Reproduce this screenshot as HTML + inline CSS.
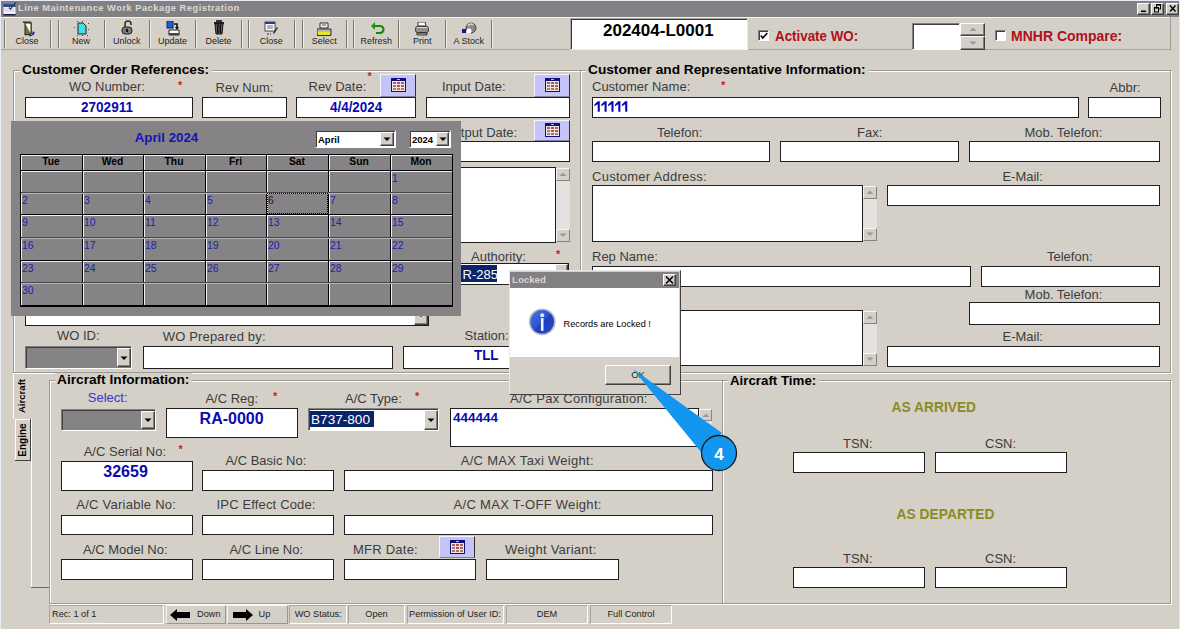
<!DOCTYPE html><html><head><meta charset="utf-8"><style>
html,body{margin:0;padding:0;}
body{width:1180px;height:629px;overflow:hidden;position:relative;background:#d4d0c8;font-family:"Liberation Sans",sans-serif;}
.r{position:absolute;}
.t{position:absolute;white-space:pre;}
</style></head><body>
<div class="r" style="left:0px;top:0px;width:1180px;height:1px;background:#e6ecf8;"></div>
<div class="r" style="left:0px;top:0px;width:1px;height:629px;background:#e8eef8;"></div>
<div class="r" style="left:1px;top:1px;width:1179px;height:16px;background:#838084;"></div>
<svg class="r" style="left:3px;top:1px" width="14" height="15"><rect x="0.5" y="3" width="12" height="3" fill="#2a4a9a"/><rect x="0.5" y="6" width="12" height="7" fill="#f2f0f4"/><path d="M1.5 8h10M1.5 10h10" stroke="#e0c8d8"/><rect x="0.5" y="13" width="12" height="1.5" fill="#101a40"/><path d="M6 6.5l1.5 1.5 5.5-7" stroke="#1a4a4a" stroke-width="1.2" fill="none"/><path d="M11.5 1l1.5-1" stroke="#c08040"/></svg>
<div class="t" style="left:18px;top:4.33px;font-size:9.3px;line-height:9.3px;color:#dcd8d4;font-weight:bold;letter-spacing:0.5px;">Line Maintenance Work Package Registration</div>
<div class="r" style="left:1137px;top:3px;width:13px;height:12px;background:#d4d0c8;box-sizing:border-box;border-top:1px solid #fff;border-left:1px solid #fff;border-right:1px solid #404040;border-bottom:1px solid #404040;box-shadow:inset -1px -1px 0 #808080;"></div>
<div class="r" style="left:1151px;top:3px;width:13px;height:12px;background:#d4d0c8;box-sizing:border-box;border-top:1px solid #fff;border-left:1px solid #fff;border-right:1px solid #404040;border-bottom:1px solid #404040;box-shadow:inset -1px -1px 0 #808080;"></div>
<div class="r" style="left:1166px;top:3px;width:13px;height:12px;background:#d4d0c8;box-sizing:border-box;border-top:1px solid #fff;border-left:1px solid #fff;border-right:1px solid #404040;border-bottom:1px solid #404040;box-shadow:inset -1px -1px 0 #808080;"></div>
<svg class="r" style="left:1137px;top:3px" width="13" height="12"><rect x="4" y="7.5" width="5" height="1.6" fill="#000"/></svg>
<svg class="r" style="left:1151px;top:3px" width="13" height="12"><rect x="5.5" y="1.5" width="4" height="4.5" fill="none" stroke="#000"/><rect x="5" y="1" width="5" height="1.6" fill="#000"/><rect x="3.5" y="4.5" width="4" height="4.5" fill="#d4d0c8" stroke="#000"/><rect x="3" y="4" width="5" height="1.6" fill="#000"/></svg>
<svg class="r" style="left:1166px;top:3px" width="13" height="12"><path d="M4 2.5l5.5 6M9.5 2.5l-5.5 6" stroke="#000" stroke-width="1.5"/></svg>
<div class="r" style="left:1179px;top:0px;width:1px;height:629px;background:#e4eaf4;"></div>
<div class="r" style="left:1px;top:17px;width:1170px;height:1px;background:#f4f2ee;"></div>
<div class="r" style="left:1px;top:49px;width:1170px;height:1px;background:#a8a49e;"></div>
<div class="r" style="left:1170px;top:17px;width:1px;height:33px;background:#9d9a96;"></div>
<div class="r" style="left:4px;top:20px;width:1px;height:28px;background:#7a7672;"></div>
<div class="r" style="left:5px;top:20px;width:1px;height:28px;background:#eeece8;"></div>
<div class="r" style="left:50px;top:20px;width:1px;height:28px;background:#7a7672;"></div>
<div class="r" style="left:51px;top:20px;width:1px;height:28px;background:#eeece8;"></div>
<div class="r" style="left:58px;top:20px;width:1px;height:28px;background:#7a7672;"></div>
<div class="r" style="left:59px;top:20px;width:1px;height:28px;background:#eeece8;"></div>
<div class="r" style="left:104px;top:20px;width:1px;height:28px;background:#7a7672;"></div>
<div class="r" style="left:105px;top:20px;width:1px;height:28px;background:#eeece8;"></div>
<div class="r" style="left:149px;top:20px;width:1px;height:28px;background:#7a7672;"></div>
<div class="r" style="left:150px;top:20px;width:1px;height:28px;background:#eeece8;"></div>
<div class="r" style="left:195px;top:20px;width:1px;height:28px;background:#7a7672;"></div>
<div class="r" style="left:196px;top:20px;width:1px;height:28px;background:#eeece8;"></div>
<div class="r" style="left:241px;top:20px;width:1px;height:28px;background:#7a7672;"></div>
<div class="r" style="left:242px;top:20px;width:1px;height:28px;background:#eeece8;"></div>
<div class="r" style="left:248px;top:20px;width:1px;height:28px;background:#7a7672;"></div>
<div class="r" style="left:249px;top:20px;width:1px;height:28px;background:#eeece8;"></div>
<div class="r" style="left:294px;top:20px;width:1px;height:28px;background:#7a7672;"></div>
<div class="r" style="left:295px;top:20px;width:1px;height:28px;background:#eeece8;"></div>
<div class="r" style="left:302px;top:20px;width:1px;height:28px;background:#7a7672;"></div>
<div class="r" style="left:303px;top:20px;width:1px;height:28px;background:#eeece8;"></div>
<div class="r" style="left:346px;top:20px;width:1px;height:28px;background:#7a7672;"></div>
<div class="r" style="left:347px;top:20px;width:1px;height:28px;background:#eeece8;"></div>
<div class="r" style="left:353px;top:20px;width:1px;height:28px;background:#7a7672;"></div>
<div class="r" style="left:354px;top:20px;width:1px;height:28px;background:#eeece8;"></div>
<div class="r" style="left:398px;top:20px;width:1px;height:28px;background:#7a7672;"></div>
<div class="r" style="left:399px;top:20px;width:1px;height:28px;background:#eeece8;"></div>
<div class="r" style="left:445px;top:20px;width:1px;height:28px;background:#7a7672;"></div>
<div class="r" style="left:446px;top:20px;width:1px;height:28px;background:#eeece8;"></div>
<div class="r" style="left:491px;top:20px;width:1px;height:28px;background:#7a7672;"></div>
<div class="r" style="left:492px;top:20px;width:1px;height:28px;background:#eeece8;"></div>
<div class="t" style="left:-173px;width:400px;text-align:center;top:37.08px;font-size:9px;line-height:9px;color:#222;font-weight:normal;">Close</div>
<div class="t" style="left:-119px;width:400px;text-align:center;top:37.08px;font-size:9px;line-height:9px;color:#222;font-weight:normal;">New</div>
<div class="t" style="left:-73.2px;width:400px;text-align:center;top:37.08px;font-size:9px;line-height:9px;color:#222;font-weight:normal;">Unlock</div>
<div class="t" style="left:-27.599999999999994px;width:400px;text-align:center;top:37.08px;font-size:9px;line-height:9px;color:#222;font-weight:normal;">Update</div>
<div class="t" style="left:18.5px;width:400px;text-align:center;top:37.08px;font-size:9px;line-height:9px;color:#222;font-weight:normal;">Delete</div>
<div class="t" style="left:71.19999999999999px;width:400px;text-align:center;top:37.08px;font-size:9px;line-height:9px;color:#222;font-weight:normal;">Close</div>
<div class="t" style="left:124.30000000000001px;width:400px;text-align:center;top:37.08px;font-size:9px;line-height:9px;color:#222;font-weight:normal;">Select</div>
<div class="t" style="left:176.2px;width:400px;text-align:center;top:37.08px;font-size:9px;line-height:9px;color:#222;font-weight:normal;">Refresh</div>
<div class="t" style="left:222.3px;width:400px;text-align:center;top:37.08px;font-size:9px;line-height:9px;color:#222;font-weight:normal;">Print</div>
<div class="t" style="left:268.7px;width:400px;text-align:center;top:37.08px;font-size:9px;line-height:9px;color:#222;font-weight:normal;">A Stock</div>
<svg class="r" style="left:22px;top:21px" width="16" height="16"><path d="M1 1h8v12l-6 1v-12z" fill="#6a7a20" stroke="#222" stroke-width="1"/><path d="M3 2h6v11" fill="#fff" stroke="#222"/><path d="M7 14c2 1 4 0 5-2" stroke="#2020a0" stroke-width="1.5" fill="none"/><path d="M11 10l2 2-3 1z" fill="#2020a0"/></svg>
<svg class="r" style="left:74px;top:21px" width="16" height="16"><path d="M4 2h5l3 3v8h-8z" fill="#40e0e8" stroke="#222"/><rect x="0" y="6" width="1" height="1" fill="#444"/><rect x="14" y="2" width="1" height="1" fill="#444"/><rect x="14" y="8" width="1" height="1" fill="#444"/><rect x="3" y="14" width="1" height="1" fill="#444"/><rect x="8" y="14" width="1" height="1" fill="#444"/><rect x="13" y="14" width="1" height="1" fill="#444"/><rect x="3" y="0" width="1" height="1" fill="#444"/><rect x="8" y="0" width="1" height="1" fill="#444"/></svg>
<svg class="r" style="left:120px;top:20px" width="16" height="16"><path d="M5 7v-3a3 3 0 0 1 6 0v1" stroke="#333" stroke-width="1.6" fill="none"/><rect x="2" y="7" width="10" height="7" rx="3" fill="#7a7a7a" stroke="#222"/><rect x="6" y="9" width="2" height="3" fill="#111"/><path d="M0 4l3 1-2 1z" fill="#e8e820"/></svg>
<svg class="r" style="left:166px;top:21px" width="16" height="16"><rect x="1" y="0" width="6" height="7" fill="#1a60d8" stroke="#102060"/><path d="M8 3h3v4" stroke="#111" stroke-width="1.6" fill="none"/><path d="M9 6h4l-2 3z" fill="#111"/><path d="M3 9h10v5h-10z" fill="#fff" stroke="#222"/><rect x="3" y="12" width="10" height="2" fill="#444"/></svg>
<svg class="r" style="left:213px;top:20px" width="16" height="16"><rect x="3" y="0" width="6" height="2" fill="#333"/><rect x="1" y="2" width="10" height="2" fill="#222"/><path d="M2 4h8l-1 10h-6z" fill="#606060" stroke="#111"/><path d="M4.5 5v8M6 5v8M7.5 5v8" stroke="#111"/></svg>
<svg class="r" style="left:264px;top:21px" width="16" height="16"><rect x="1" y="1" width="10" height="9" fill="#fff" stroke="#444"/><rect x="1" y="1" width="10" height="2" fill="#2a3a90"/><path d="M3 5h6M3 7h6" stroke="#666"/><path d="M9 12l4-6 1 1-4 6z" fill="#333"/><path d="M3 13h2M6 13h1" stroke="#333"/></svg>
<svg class="r" style="left:317px;top:22px" width="16" height="16"><path d="M3 1h8v5h-8z" fill="#f0f0f0" stroke="#333"/><path d="M5 3h4" stroke="#555"/><path d="M0 7h14v6h-14z" fill="#b8b8b8" stroke="#333"/><rect x="1" y="10" width="12" height="3" fill="#e8e820"/><rect x="0" y="13" width="14" height="1" fill="#333"/></svg>
<svg class="r" style="left:371px;top:22px" width="16" height="16"><path d="M3 4h6a3 3 0 0 1 0 7h-4" stroke="#118811" stroke-width="2.2" fill="none"/><path d="M0 4l4-4v8z" fill="#119911"/></svg>
<svg class="r" style="left:415px;top:22px" width="16" height="16"><path d="M3 0h7l1 4h-8z" fill="#fff" stroke="#333"/><rect x="0.5" y="4.5" width="13" height="6" rx="2" fill="#ddd" stroke="#333"/><path d="M1 7h12M1 9h12" stroke="#444"/><path d="M2 11h10v2h-10z" fill="#bbb" stroke="#333"/></svg>
<svg class="r" style="left:462px;top:22px" width="16" height="16"><circle cx="9" cy="6" r="5" fill="#888" stroke="#444"/><path d="M6 4a3 3 0 0 1 5-1" stroke="#ddd" stroke-width="1.5" fill="none"/><circle cx="7" cy="9" r="2.5" fill="#fff"/><rect x="0" y="7" width="4" height="4" fill="#1a1a90"/></svg>
<div class="r" style="left:570px;top:18px;width:178px;height:32px;background:#fff;box-sizing:border-box;border-top:1px solid #a8a49e;border-left:1px solid #a8a49e;border-right:1px solid #e8e6e2;border-bottom:1px solid #f0f0f0;box-shadow:inset 1px 1px 0 #383838;"></div>
<div class="t" style="left:603px;top:21.81px;font-size:17px;line-height:17px;color:#000;font-weight:bold;">202404-L0001</div>
<div class="r" style="left:758px;top:30px;width:11px;height:11px;background:#fff;box-sizing:border-box;border-top:1px solid #808080;border-left:1px solid #808080;border-right:1px solid #fff;border-bottom:1px solid #fff;box-shadow:inset 1px 1px 0 #404040;"></div>
<svg class="r" style="left:759.5px;top:31.5px" width="8" height="8"><path d="M0.8 3.5l2 2.5 4.5-5" stroke="#000" stroke-width="1.6" fill="none"/></svg>
<div class="t" style="left:775px;top:28.70px;font-size:14.3px;line-height:14.3px;color:#b0101a;font-weight:bold;transform:scaleX(0.935);transform-origin:0 0;">Activate WO:</div>
<div class="r" style="left:912px;top:23px;width:48px;height:27px;background:#fff;box-sizing:border-box;border-top:1px solid #808080;border-left:1px solid #808080;border-right:1px solid #fff;border-bottom:1px solid #fff;box-shadow:inset 1px 1px 0 #404040;"></div>
<div class="r" style="left:960px;top:23px;width:25px;height:13px;background:#d4d0c8;box-sizing:border-box;border-top:1px solid #fff;border-left:1px solid #fff;border-right:1px solid #404040;border-bottom:1px solid #404040;box-shadow:inset -1px -1px 0 #808080;"></div>
<div class="r" style="left:960px;top:36px;width:25px;height:14px;background:#d4d0c8;box-sizing:border-box;border-top:1px solid #fff;border-left:1px solid #fff;border-right:1px solid #404040;border-bottom:1px solid #404040;box-shadow:inset -1px -1px 0 #808080;"></div>
<svg class="r" style="left:969px;top:27px" width="8" height="5"><path d="M0.5 4h7l-3.5-3.5z" fill="#999"/></svg>
<svg class="r" style="left:969px;top:41px" width="8" height="5"><path d="M0.5 0.5h7l-3.5 3.5z" fill="#999"/></svg>
<div class="r" style="left:995px;top:30px;width:11px;height:11px;background:#fff;box-sizing:border-box;border-top:1px solid #808080;border-left:1px solid #808080;border-right:1px solid #fff;border-bottom:1px solid #fff;box-shadow:inset 1px 1px 0 #404040;"></div>
<div class="t" style="left:1011px;top:29.15px;font-size:14px;line-height:14px;color:#b0101a;font-weight:bold;">MNHR Compare:</div>
<div class="r" style="left:14px;top:71px;width:568px;height:303px;background:transparent;box-sizing:border-box;border:1px solid #fff;"></div>
<div class="r" style="left:13px;top:70px;width:568px;height:303px;background:transparent;box-sizing:border-box;border:1px solid #9d9a96;"></div>
<div class="t" style="left:20px;top:62.80px;font-size:13.7px;line-height:13.7px;color:#000;font-weight:bold;background:#d4d0c8;padding:0 3px 0 2px">Customer Order References:</div>
<div class="t" style="left:69px;top:80.40px;font-size:13px;line-height:13px;color:#3c3c3c;font-weight:normal;">WO Number:</div>
<div class="t" style="left:178px;top:80px;font-size:11px;line-height:11px;color:#d01818;font-weight:bold">*</div>
<div class="t" style="left:215.6px;top:80.90px;font-size:13px;line-height:13px;color:#3c3c3c;font-weight:normal;">Rev Num:</div>
<div class="t" style="left:308.5px;top:80.40px;font-size:13px;line-height:13px;color:#3c3c3c;font-weight:normal;">Rev Date:</div>
<div class="t" style="left:367.5px;top:71px;font-size:11px;line-height:11px;color:#d01818;font-weight:bold">*</div>
<div class="r" style="left:380px;top:74px;width:36px;height:23px;background:#c4c4f8;box-sizing:border-box;border-top:1px solid #f4f4ff;border-left:1px solid #f4f4ff;border-right:1px solid #303030;border-bottom:1px solid #8080a0;"></div>
<svg class="r" style="left:391px;top:78px" width="15" height="14"><rect x="0" y="0" width="15" height="14" fill="#10107a"/><rect x="1" y="3" width="13" height="10" fill="#f0e8e0"/>
<rect x="2" y="4" width="3" height="2" fill="#b06060"/><rect x="6" y="4" width="3" height="2" fill="#c05050"/><rect x="10" y="4" width="3" height="2" fill="#b06060"/>
<rect x="2" y="7" width="3" height="2" fill="#a08070"/><rect x="6" y="7" width="3" height="2" fill="#c05050"/><rect x="10" y="7" width="3" height="2" fill="#b06060"/>
<rect x="2" y="10" width="3" height="2" fill="#a08070"/><rect x="6" y="10" width="3" height="2" fill="#b07070"/><rect x="10" y="10" width="3" height="2" fill="#a08070"/>
<rect x="6" y="1" width="3" height="1" fill="#c0c0ff"/></svg>
<div class="t" style="left:442px;top:80.40px;font-size:13px;line-height:13px;color:#3c3c3c;font-weight:normal;">Input Date:</div>
<div class="r" style="left:534px;top:74px;width:36px;height:23px;background:#c4c4f8;box-sizing:border-box;border-top:1px solid #f4f4ff;border-left:1px solid #f4f4ff;border-right:1px solid #303030;border-bottom:1px solid #8080a0;"></div>
<svg class="r" style="left:545px;top:78px" width="15" height="14"><rect x="0" y="0" width="15" height="14" fill="#10107a"/><rect x="1" y="3" width="13" height="10" fill="#f0e8e0"/>
<rect x="2" y="4" width="3" height="2" fill="#b06060"/><rect x="6" y="4" width="3" height="2" fill="#c05050"/><rect x="10" y="4" width="3" height="2" fill="#b06060"/>
<rect x="2" y="7" width="3" height="2" fill="#a08070"/><rect x="6" y="7" width="3" height="2" fill="#c05050"/><rect x="10" y="7" width="3" height="2" fill="#b06060"/>
<rect x="2" y="10" width="3" height="2" fill="#a08070"/><rect x="6" y="10" width="3" height="2" fill="#b07070"/><rect x="10" y="10" width="3" height="2" fill="#a08070"/>
<rect x="6" y="1" width="3" height="1" fill="#c0c0ff"/></svg>
<div class="r" style="left:25px;top:97px;width:168px;height:21px;background:#fff;box-sizing:border-box;border:1px solid #1e1e1e;"></div>
<div class="t" style="left:81.3px;top:100.03px;font-size:14.5px;line-height:14.5px;color:#0a0ab0;font-weight:bold;transform:scaleX(0.935);transform-origin:0 0;">2702911</div>
<div class="r" style="left:202px;top:97px;width:85px;height:21px;background:#fff;box-sizing:border-box;border:1px solid #1e1e1e;"></div>
<div class="r" style="left:296px;top:97px;width:120px;height:21px;background:#fff;box-sizing:border-box;border:1px solid #1e1e1e;"></div>
<div class="t" style="left:329.5px;top:99.93px;font-size:14.5px;line-height:14.5px;color:#0a0ab0;font-weight:bold;transform:scaleX(0.925);transform-origin:0 0;">4/4/2024</div>
<div class="r" style="left:426px;top:97px;width:144px;height:21px;background:#fff;box-sizing:border-box;border:1px solid #1e1e1e;"></div>
<div class="t" style="left:443.5px;top:125.50px;font-size:13px;line-height:13px;color:#3c3c3c;font-weight:normal;">Output Date:</div>
<div class="r" style="left:534px;top:120px;width:36px;height:21px;background:#c4c4f8;box-sizing:border-box;border-top:1px solid #f4f4ff;border-left:1px solid #f4f4ff;border-right:1px solid #303030;border-bottom:1px solid #8080a0;"></div>
<svg class="r" style="left:545px;top:123px" width="15" height="14"><rect x="0" y="0" width="15" height="14" fill="#10107a"/><rect x="1" y="3" width="13" height="10" fill="#f0e8e0"/>
<rect x="2" y="4" width="3" height="2" fill="#b06060"/><rect x="6" y="4" width="3" height="2" fill="#c05050"/><rect x="10" y="4" width="3" height="2" fill="#b06060"/>
<rect x="2" y="7" width="3" height="2" fill="#a08070"/><rect x="6" y="7" width="3" height="2" fill="#c05050"/><rect x="10" y="7" width="3" height="2" fill="#b06060"/>
<rect x="2" y="10" width="3" height="2" fill="#a08070"/><rect x="6" y="10" width="3" height="2" fill="#b07070"/><rect x="10" y="10" width="3" height="2" fill="#a08070"/>
<rect x="6" y="1" width="3" height="1" fill="#c0c0ff"/></svg>
<div class="r" style="left:426px;top:141px;width:144px;height:21px;background:#fff;box-sizing:border-box;border:1px solid #1e1e1e;"></div>
<div class="r" style="left:25px;top:167px;width:531px;height:76px;background:#fff;box-sizing:border-box;border:1px solid #1e1e1e;"></div>
<div class="r" style="left:556px;top:168px;width:14px;height:74px;background:#e4e2de;"></div>
<div class="r" style="left:556px;top:168px;width:14px;height:13px;background:#d4d0c8;box-sizing:border-box;border-top:1px solid #f6f6f6;border-left:1px solid #f6f6f6;border-right:1px solid #86827e;border-bottom:1px solid #86827e;"></div>
<div class="r" style="left:556px;top:229px;width:14px;height:13px;background:#d4d0c8;box-sizing:border-box;border-top:1px solid #f6f6f6;border-left:1px solid #f6f6f6;border-right:1px solid #86827e;border-bottom:1px solid #86827e;"></div>
<svg class="r" style="left:559.0px;top:172.0px" width="8" height="5"><path d="M0.5 4h7l-3.5-3.5z" fill="#9a9a9a"/></svg>
<svg class="r" style="left:559.0px;top:233.0px" width="8" height="5"><path d="M0.5 0.5h7l-3.5 3.5z" fill="#9a9a9a"/></svg>
<div class="t" style="left:471px;top:250.00px;font-size:13px;line-height:13px;color:#3c3c3c;font-weight:normal;">Authority:</div>
<div class="t" style="left:556px;top:249px;font-size:11px;line-height:11px;color:#d01818;font-weight:bold">*</div>
<div class="r" style="left:403px;top:263px;width:166px;height:22px;background:#fff;box-sizing:border-box;border:1px solid #1e1e1e;"></div>
<div class="r" style="left:404px;top:265px;width:93px;height:17px;background:#0a246a;"></div>
<div class="t" style="left:462.5px;top:268.00px;font-size:13px;line-height:13px;color:#fff;font-weight:normal;">R-285</div>
<div class="r" style="left:555px;top:264px;width:13px;height:20px;background:#d4d0c8;box-sizing:border-box;border-top:1px solid #fff;border-left:1px solid #fff;border-right:1px solid #404040;border-bottom:1px solid #404040;box-shadow:inset -1px -1px 0 #808080;"></div>
<svg class="r" style="left:557.5px;top:272.0px" width="8" height="5"><path d="M0.5 0.5h7l-3.5 3.5z" fill="#000"/></svg>
<div class="r" style="left:25px;top:304px;width:404px;height:22px;background:#fff;box-sizing:border-box;border:1px solid #1e1e1e;"></div>
<div class="r" style="left:414px;top:305px;width:14px;height:20px;background:#d4d0c8;box-sizing:border-box;border-top:1px solid #fff;border-left:1px solid #fff;border-right:1px solid #404040;border-bottom:1px solid #404040;box-shadow:inset -1px -1px 0 #808080;"></div>
<svg class="r" style="left:417.0px;top:313.0px" width="8" height="5"><path d="M0.5 0.5h7l-3.5 3.5z" fill="#000"/></svg>
<div class="t" style="left:57px;top:329.00px;font-size:13px;line-height:13px;color:#3c3c3c;font-weight:normal;">WO ID:</div>
<div class="t" style="left:162.7px;top:329.70px;font-size:13px;line-height:13px;color:#3c3c3c;font-weight:normal;letter-spacing:0.17px;">WO Prepared by:</div>
<div class="t" style="left:464.6px;top:329.00px;font-size:13px;line-height:13px;color:#3c3c3c;font-weight:normal;">Station:</div>
<div class="r" style="left:25px;top:346px;width:107px;height:23px;background:#858385;box-sizing:border-box;border-top:1px solid #808080;border-left:1px solid #808080;border-right:1px solid #fff;border-bottom:1px solid #fff;box-shadow:inset 1px 1px 0 #404040;"></div>
<div class="r" style="left:117px;top:348px;width:14px;height:19px;background:#d4d0c8;box-sizing:border-box;border-top:1px solid #fff;border-left:1px solid #fff;border-right:1px solid #404040;border-bottom:1px solid #404040;box-shadow:inset -1px -1px 0 #808080;"></div>
<svg class="r" style="left:120.0px;top:355.5px" width="8" height="5"><path d="M0.5 0.5h7l-3.5 3.5z" fill="#000"/></svg>
<div class="r" style="left:143px;top:346px;width:250px;height:23px;background:#fff;box-sizing:border-box;border:1px solid #1e1e1e;"></div>
<div class="r" style="left:403px;top:346px;width:157px;height:23px;background:#fff;box-sizing:border-box;border:1px solid #1e1e1e;"></div>
<div class="t" style="left:473.5px;top:348.03px;font-size:14.5px;line-height:14.5px;color:#0a0ab0;font-weight:bold;transform:scaleX(0.92);transform-origin:0 0;">TLL</div>
<div class="r" style="left:581px;top:71px;width:591px;height:303px;background:transparent;box-sizing:border-box;border:1px solid #fff;"></div>
<div class="r" style="left:580px;top:70px;width:591px;height:303px;background:transparent;box-sizing:border-box;border:1px solid #9d9a96;"></div>
<div class="t" style="left:586px;top:62.80px;font-size:13.7px;line-height:13.7px;color:#000;font-weight:bold;background:#d4d0c8;padding:0 3px 0 2px">Customer and Representative Information:</div>
<div class="t" style="left:592px;top:80.40px;font-size:13px;line-height:13px;color:#3c3c3c;font-weight:normal;">Customer Name:</div>
<div class="t" style="left:721px;top:80px;font-size:11px;line-height:11px;color:#d01818;font-weight:bold">*</div>
<div class="t" style="left:1109.5px;top:81.20px;font-size:13px;line-height:13px;color:#3c3c3c;font-weight:normal;">Abbr:</div>
<div class="r" style="left:592px;top:97px;width:487px;height:21px;background:#fff;box-sizing:border-box;border:1px solid #1e1e1e;"></div>
<svg class="r" style="left:590.6px;top:100px" width="45" height="13"><path d="M6.70 1.2H8.80V11.8H6.70V4.2L3.40 6.3V4.4L6.70 1.2Z M13.57 1.2H15.67V11.8H13.57V4.2L10.27 6.3V4.4L13.57 1.2Z M20.44 1.2H22.54V11.8H20.44V4.2L17.14 6.3V4.4L20.44 1.2Z M27.31 1.2H29.41V11.8H27.31V4.2L24.01 6.3V4.4L27.31 1.2Z M34.18 1.2H36.28V11.8H34.18V4.2L30.88 6.3V4.4L34.18 1.2Z" fill="#0a0ab0"/></svg>
<div class="r" style="left:1088px;top:97px;width:73px;height:21px;background:#fff;box-sizing:border-box;border:1px solid #1e1e1e;"></div>
<div class="t" style="left:656.9px;top:126.00px;font-size:13px;line-height:13px;color:#3c3c3c;font-weight:normal;">Telefon:</div>
<div class="t" style="left:857px;top:126.00px;font-size:13px;line-height:13px;color:#3c3c3c;font-weight:normal;">Fax:</div>
<div class="t" style="left:1024.5px;top:126.00px;font-size:13px;line-height:13px;color:#3c3c3c;font-weight:normal;">Mob. Telefon:</div>
<div class="r" style="left:592px;top:141px;width:178px;height:21px;background:#fff;box-sizing:border-box;border:1px solid #1e1e1e;"></div>
<div class="r" style="left:780px;top:141px;width:179px;height:21px;background:#fff;box-sizing:border-box;border:1px solid #1e1e1e;"></div>
<div class="r" style="left:969px;top:141px;width:191px;height:21px;background:#fff;box-sizing:border-box;border:1px solid #1e1e1e;"></div>
<div class="t" style="left:592px;top:170.00px;font-size:13px;line-height:13px;color:#3c3c3c;font-weight:normal;letter-spacing:0.26px;">Customer Address:</div>
<div class="t" style="left:1002.4px;top:170.00px;font-size:13px;line-height:13px;color:#3c3c3c;font-weight:normal;">E-Mail:</div>
<div class="r" style="left:592px;top:185px;width:271px;height:57px;background:#fff;box-sizing:border-box;border:1px solid #1e1e1e;"></div>
<div class="r" style="left:863px;top:186px;width:14px;height:55px;background:#e4e2de;"></div>
<div class="r" style="left:863px;top:186px;width:14px;height:13px;background:#d4d0c8;box-sizing:border-box;border-top:1px solid #f6f6f6;border-left:1px solid #f6f6f6;border-right:1px solid #86827e;border-bottom:1px solid #86827e;"></div>
<div class="r" style="left:863px;top:228px;width:14px;height:13px;background:#d4d0c8;box-sizing:border-box;border-top:1px solid #f6f6f6;border-left:1px solid #f6f6f6;border-right:1px solid #86827e;border-bottom:1px solid #86827e;"></div>
<svg class="r" style="left:866.0px;top:190.0px" width="8" height="5"><path d="M0.5 4h7l-3.5-3.5z" fill="#9a9a9a"/></svg>
<svg class="r" style="left:866.0px;top:232.0px" width="8" height="5"><path d="M0.5 0.5h7l-3.5 3.5z" fill="#9a9a9a"/></svg>
<div class="r" style="left:887px;top:185px;width:273px;height:21px;background:#fff;box-sizing:border-box;border:1px solid #1e1e1e;"></div>
<div class="t" style="left:592px;top:250.00px;font-size:13px;line-height:13px;color:#3c3c3c;font-weight:normal;">Rep Name:</div>
<div class="t" style="left:1047px;top:250.00px;font-size:13px;line-height:13px;color:#3c3c3c;font-weight:normal;">Telefon:</div>
<div class="r" style="left:592px;top:266px;width:379px;height:21px;background:#fff;box-sizing:border-box;border:1px solid #1e1e1e;"></div>
<div class="r" style="left:981px;top:266px;width:179px;height:21px;background:#fff;box-sizing:border-box;border:1px solid #1e1e1e;"></div>
<div class="t" style="left:592px;top:288.30px;font-size:13px;line-height:13px;color:#3c3c3c;font-weight:normal;">Address:</div>
<div class="t" style="left:1024.6px;top:288.30px;font-size:13px;line-height:13px;color:#3c3c3c;font-weight:normal;">Mob. Telefon:</div>
<div class="r" style="left:969px;top:302px;width:191px;height:23px;background:#fff;box-sizing:border-box;border:1px solid #1e1e1e;"></div>
<div class="r" style="left:592px;top:310px;width:271px;height:56px;background:#fff;box-sizing:border-box;border:1px solid #1e1e1e;"></div>
<div class="r" style="left:863px;top:311px;width:14px;height:55px;background:#e4e2de;"></div>
<div class="r" style="left:863px;top:311px;width:14px;height:13px;background:#d4d0c8;box-sizing:border-box;border-top:1px solid #f6f6f6;border-left:1px solid #f6f6f6;border-right:1px solid #86827e;border-bottom:1px solid #86827e;"></div>
<div class="r" style="left:863px;top:353px;width:14px;height:13px;background:#d4d0c8;box-sizing:border-box;border-top:1px solid #f6f6f6;border-left:1px solid #f6f6f6;border-right:1px solid #86827e;border-bottom:1px solid #86827e;"></div>
<svg class="r" style="left:866.0px;top:315.0px" width="8" height="5"><path d="M0.5 4h7l-3.5-3.5z" fill="#9a9a9a"/></svg>
<svg class="r" style="left:866.0px;top:357.0px" width="8" height="5"><path d="M0.5 0.5h7l-3.5 3.5z" fill="#9a9a9a"/></svg>
<div class="t" style="left:1002.5px;top:330.00px;font-size:13px;line-height:13px;color:#3c3c3c;font-weight:normal;">E-Mail:</div>
<div class="r" style="left:887px;top:346px;width:273px;height:21px;background:#fff;box-sizing:border-box;border:1px solid #1e1e1e;"></div>
<div class="r" style="left:13px;top:373px;width:1px;height:46px;background:#fff;"></div>
<div class="r" style="left:13px;top:373px;width:18px;height:1px;background:#fff;"></div>
<div class="r" style="left:31px;top:419px;width:1px;height:169px;background:#fff;"></div>
<div class="r" style="left:31px;top:587px;width:18px;height:1px;background:#6a6a6a;"></div>
<div class="r" style="left:15px;top:419px;width:1px;height:42px;background:#fff;"></div>
<div class="r" style="left:15px;top:419px;width:16px;height:1px;background:#fff;"></div>
<div class="r" style="left:15px;top:460px;width:16px;height:1px;background:#404040;"></div>
<div class="r" style="left:30px;top:419px;width:1px;height:42px;background:#404040;"></div>
<div class="t" style="left:22px;top:396px;transform:translate(-50%,-50%) rotate(-90deg);font-size:9.6px;line-height:10px;font-weight:bold;color:#000">Aircraft</div>
<div class="t" style="left:23px;top:439.5px;transform:translate(-50%,-50%) rotate(-90deg);font-size:10px;line-height:10px;font-weight:bold;color:#000">Engine</div>
<div class="r" style="left:50px;top:381px;width:674px;height:224px;background:transparent;box-sizing:border-box;border:1px solid #fff;"></div>
<div class="r" style="left:49px;top:380px;width:674px;height:224px;background:transparent;box-sizing:border-box;border:1px solid #9d9a96;"></div>
<div class="t" style="left:55px;top:373.40px;font-size:13.7px;line-height:13.7px;color:#000;font-weight:bold;background:#d4d0c8;padding:0 3px 0 2px">Aircraft Information:</div>
<div class="t" style="left:87.8px;top:391.00px;font-size:13px;line-height:13px;color:#3838c0;font-weight:normal;">Select:</div>
<div class="r" style="left:61px;top:409px;width:95px;height:22px;background:#858385;box-sizing:border-box;border-top:1px solid #808080;border-left:1px solid #808080;border-right:1px solid #fff;border-bottom:1px solid #fff;box-shadow:inset 1px 1px 0 #404040;"></div>
<div class="r" style="left:141px;top:411px;width:14px;height:18px;background:#d4d0c8;box-sizing:border-box;border-top:1px solid #fff;border-left:1px solid #fff;border-right:1px solid #404040;border-bottom:1px solid #404040;box-shadow:inset -1px -1px 0 #808080;"></div>
<svg class="r" style="left:144.0px;top:418.0px" width="8" height="5"><path d="M0.5 0.5h7l-3.5 3.5z" fill="#000"/></svg>
<div class="t" style="left:205.4px;top:392.00px;font-size:13px;line-height:13px;color:#3c3c3c;font-weight:normal;">A/C Reg:</div>
<div class="t" style="left:273px;top:391px;font-size:11px;line-height:11px;color:#d01818;font-weight:bold">*</div>
<div class="r" style="left:166px;top:408px;width:132px;height:30px;background:#fff;box-sizing:border-box;border:1px solid #1e1e1e;"></div>
<div class="t" style="left:199.6px;top:411.26px;font-size:16px;line-height:16px;color:#0a0ab0;font-weight:bold;">RA-0000</div>
<div class="t" style="left:345px;top:392.00px;font-size:13px;line-height:13px;color:#3c3c3c;font-weight:normal;">A/C Type:</div>
<div class="t" style="left:415px;top:391px;font-size:11px;line-height:11px;color:#d01818;font-weight:bold">*</div>
<div class="r" style="left:308px;top:408px;width:131px;height:23px;background:#fff;box-sizing:border-box;border-top:1px solid #808080;border-left:1px solid #808080;border-right:1px solid #fff;border-bottom:1px solid #fff;box-shadow:inset 1px 1px 0 #404040;"></div>
<div class="r" style="left:310px;top:411px;width:64px;height:16px;background:#0a246a;"></div>
<div class="t" style="left:311px;top:412.99px;font-size:13.6px;line-height:13.6px;color:#fff;font-weight:normal;">B737-800</div>
<div class="r" style="left:424px;top:410px;width:14px;height:20px;background:#d4d0c8;box-sizing:border-box;border-top:1px solid #fff;border-left:1px solid #fff;border-right:1px solid #404040;border-bottom:1px solid #404040;box-shadow:inset -1px -1px 0 #808080;"></div>
<svg class="r" style="left:427.0px;top:418.0px" width="8" height="5"><path d="M0.5 0.5h7l-3.5 3.5z" fill="#000"/></svg>
<div class="t" style="left:510px;top:392.00px;font-size:13px;line-height:13px;color:#3c3c3c;font-weight:normal;letter-spacing:0.25px;">A/C Pax Configuration:</div>
<div class="r" style="left:450px;top:408px;width:249px;height:39px;background:#fff;box-sizing:border-box;border:1px solid #1e1e1e;"></div>
<div class="t" style="left:453px;top:411.27px;font-size:13.5px;line-height:13.5px;color:#0a0ab0;font-weight:bold;">444444</div>
<div class="r" style="left:699px;top:409px;width:13px;height:38px;background:#e4e2de;"></div>
<div class="r" style="left:699px;top:409px;width:13px;height:12px;background:#d4d0c8;box-sizing:border-box;border-top:1px solid #f6f6f6;border-left:1px solid #f6f6f6;border-right:1px solid #86827e;border-bottom:1px solid #86827e;"></div>
<div class="r" style="left:699px;top:435px;width:13px;height:12px;background:#d4d0c8;box-sizing:border-box;border-top:1px solid #f6f6f6;border-left:1px solid #f6f6f6;border-right:1px solid #86827e;border-bottom:1px solid #86827e;"></div>
<svg class="r" style="left:701.5px;top:412.5px" width="8" height="5"><path d="M0.5 4h7l-3.5-3.5z" fill="#9a9a9a"/></svg>
<svg class="r" style="left:701.5px;top:438.5px" width="8" height="5"><path d="M0.5 0.5h7l-3.5 3.5z" fill="#9a9a9a"/></svg>
<div class="t" style="left:83.7px;top:444.80px;font-size:13px;line-height:13px;color:#3c3c3c;font-weight:normal;">A/C Serial No:</div>
<div class="t" style="left:178.6px;top:444px;font-size:11px;line-height:11px;color:#d01818;font-weight:bold">*</div>
<div class="r" style="left:61px;top:461px;width:132px;height:30px;background:#fff;box-sizing:border-box;border:1px solid #1e1e1e;"></div>
<div class="t" style="left:103.3px;top:463.96px;font-size:16px;line-height:16px;color:#0a0ab0;font-weight:bold;">32659</div>
<div class="t" style="left:225.4px;top:454.00px;font-size:13px;line-height:13px;color:#3c3c3c;font-weight:normal;">A/C Basic No:</div>
<div class="r" style="left:202px;top:470px;width:132px;height:21px;background:#fff;box-sizing:border-box;border:1px solid #1e1e1e;"></div>
<div class="t" style="left:460.7px;top:454.00px;font-size:13px;line-height:13px;color:#3c3c3c;font-weight:normal;letter-spacing:0.29px;">A/C MAX Taxi Weight:</div>
<div class="r" style="left:344px;top:470px;width:369px;height:21px;background:#fff;box-sizing:border-box;border:1px solid #1e1e1e;"></div>
<div class="t" style="left:76.3px;top:498.00px;font-size:13px;line-height:13px;color:#3c3c3c;font-weight:normal;letter-spacing:0.25px;">A/C Variable No:</div>
<div class="t" style="left:216.6px;top:498.00px;font-size:13px;line-height:13px;color:#3c3c3c;font-weight:normal;letter-spacing:0.15px;">IPC Effect Code:</div>
<div class="t" style="left:453.6px;top:497.80px;font-size:13px;line-height:13px;color:#3c3c3c;font-weight:normal;letter-spacing:0.3px;">A/C MAX T-OFF Weight:</div>
<div class="r" style="left:61px;top:515px;width:132px;height:20px;background:#fff;box-sizing:border-box;border:1px solid #1e1e1e;"></div>
<div class="r" style="left:202px;top:515px;width:132px;height:20px;background:#fff;box-sizing:border-box;border:1px solid #1e1e1e;"></div>
<div class="r" style="left:344px;top:515px;width:369px;height:20px;background:#fff;box-sizing:border-box;border:1px solid #1e1e1e;"></div>
<div class="t" style="left:83px;top:543.00px;font-size:13px;line-height:13px;color:#3c3c3c;font-weight:normal;">A/C Model No:</div>
<div class="t" style="left:229.4px;top:543.00px;font-size:13px;line-height:13px;color:#3c3c3c;font-weight:normal;">A/C Line No:</div>
<div class="t" style="left:352.9px;top:542.90px;font-size:13px;line-height:13px;color:#3c3c3c;font-weight:normal;letter-spacing:0.25px;">MFR Date:</div>
<div class="r" style="left:439px;top:536px;width:36px;height:22px;background:#c4c4f8;box-sizing:border-box;border-top:1px solid #f4f4ff;border-left:1px solid #f4f4ff;border-right:1px solid #303030;border-bottom:1px solid #8080a0;"></div>
<svg class="r" style="left:450px;top:540px" width="15" height="14"><rect x="0" y="0" width="15" height="14" fill="#10107a"/><rect x="1" y="3" width="13" height="10" fill="#f0e8e0"/>
<rect x="2" y="4" width="3" height="2" fill="#b06060"/><rect x="6" y="4" width="3" height="2" fill="#c05050"/><rect x="10" y="4" width="3" height="2" fill="#b06060"/>
<rect x="2" y="7" width="3" height="2" fill="#a08070"/><rect x="6" y="7" width="3" height="2" fill="#c05050"/><rect x="10" y="7" width="3" height="2" fill="#b06060"/>
<rect x="2" y="10" width="3" height="2" fill="#a08070"/><rect x="6" y="10" width="3" height="2" fill="#b07070"/><rect x="10" y="10" width="3" height="2" fill="#a08070"/>
<rect x="6" y="1" width="3" height="1" fill="#c0c0ff"/></svg>
<div class="t" style="left:505px;top:542.90px;font-size:13px;line-height:13px;color:#3c3c3c;font-weight:normal;letter-spacing:0.26px;">Weight Variant:</div>
<div class="r" style="left:61px;top:559px;width:132px;height:21px;background:#fff;box-sizing:border-box;border:1px solid #1e1e1e;"></div>
<div class="r" style="left:202px;top:559px;width:132px;height:21px;background:#fff;box-sizing:border-box;border:1px solid #1e1e1e;"></div>
<div class="r" style="left:344px;top:559px;width:132px;height:21px;background:#fff;box-sizing:border-box;border:1px solid #1e1e1e;"></div>
<div class="r" style="left:486px;top:559px;width:133px;height:21px;background:#fff;box-sizing:border-box;border:1px solid #1e1e1e;"></div>
<div class="r" style="left:723px;top:381px;width:449px;height:224px;background:transparent;box-sizing:border-box;border:1px solid #fff;"></div>
<div class="r" style="left:722px;top:380px;width:449px;height:224px;background:transparent;box-sizing:border-box;border:1px solid #9d9a96;"></div>
<div class="t" style="left:728px;top:374.14px;font-size:13.3px;line-height:13.3px;color:#000;font-weight:bold;background:#d4d0c8;padding:0 3px 0 2px">Aircraft Time:</div>
<div class="t" style="left:891.5px;top:400.82px;font-size:13.8px;line-height:13.8px;color:#8c8c1e;font-weight:bold;">AS ARRIVED</div>
<div class="t" style="left:843px;top:436.80px;font-size:13px;line-height:13px;color:#3c3c3c;font-weight:normal;">TSN:</div>
<div class="t" style="left:985px;top:436.80px;font-size:13px;line-height:13px;color:#3c3c3c;font-weight:normal;">CSN:</div>
<div class="r" style="left:793px;top:452px;width:132px;height:21px;background:#fff;box-sizing:border-box;border:1px solid #1e1e1e;"></div>
<div class="r" style="left:935px;top:452px;width:132px;height:21px;background:#fff;box-sizing:border-box;border:1px solid #1e1e1e;"></div>
<div class="t" style="left:896.6px;top:507.62px;font-size:13.8px;line-height:13.8px;color:#8c8c1e;font-weight:bold;">AS DEPARTED</div>
<div class="t" style="left:843px;top:552.00px;font-size:13px;line-height:13px;color:#3c3c3c;font-weight:normal;">TSN:</div>
<div class="t" style="left:985px;top:552.00px;font-size:13px;line-height:13px;color:#3c3c3c;font-weight:normal;">CSN:</div>
<div class="r" style="left:793px;top:567px;width:132px;height:21px;background:#fff;box-sizing:border-box;border:1px solid #1e1e1e;"></div>
<div class="r" style="left:935px;top:567px;width:132px;height:21px;background:#fff;box-sizing:border-box;border:1px solid #1e1e1e;"></div>
<div class="r" style="left:49px;top:605px;width:115px;height:19px;background:#d4d0c8;box-sizing:border-box;border-top:1px solid #a8a49e;border-left:1px solid #a8a49e;border-right:1px solid #fff;border-bottom:1px solid #fff;"></div>
<div class="t" style="left:52px;top:609.81px;font-size:9.2px;line-height:9.2px;color:#222;font-weight:normal;">Rec: 1 of 1</div>
<div class="r" style="left:166px;top:605px;width:60px;height:19px;background:#d4d0c8;box-sizing:border-box;border-top:1px solid #f4f4f4;border-left:1px solid #f4f4f4;border-right:1px solid #9a9692;border-bottom:1px solid #9a9692;"></div>
<div class="r" style="left:227px;top:605px;width:61px;height:19px;background:#d4d0c8;box-sizing:border-box;border-top:1px solid #f4f4f4;border-left:1px solid #f4f4f4;border-right:1px solid #9a9692;border-bottom:1px solid #9a9692;"></div>
<svg class="r" style="left:170px;top:609px" width="22" height="12"><path d="M0 6l7-6v3h13v6h-13v3z" fill="#000"/></svg>
<div class="t" style="left:197px;top:609.81px;font-size:9.2px;line-height:9.2px;color:#222;font-weight:normal;">Down</div>
<svg class="r" style="left:232px;top:609px" width="22" height="12"><path d="M21 6l-7-6v3h-13v6h13v3z" fill="#000"/></svg>
<div class="t" style="left:258.5px;top:609.81px;font-size:9.2px;line-height:9.2px;color:#222;font-weight:normal;">Up</div>
<div class="r" style="left:289px;top:605px;width:58px;height:19px;background:#d4d0c8;box-sizing:border-box;border-top:1px solid #a8a49e;border-left:1px solid #a8a49e;border-right:1px solid #fff;border-bottom:1px solid #fff;"></div>
<div class="t" style="left:294.7px;top:609.81px;font-size:9.2px;line-height:9.2px;color:#222;font-weight:normal;">WO Status:</div>
<div class="r" style="left:348px;top:605px;width:57px;height:19px;background:#d4d0c8;box-sizing:border-box;border-top:1px solid #a8a49e;border-left:1px solid #a8a49e;border-right:1px solid #fff;border-bottom:1px solid #fff;"></div>
<div class="t" style="left:176.5px;width:400px;text-align:center;top:609.81px;font-size:9.2px;line-height:9.2px;color:#222;font-weight:normal;">Open</div>
<div class="r" style="left:407px;top:605px;width:97px;height:19px;background:#d4d0c8;box-sizing:border-box;border-top:1px solid #a8a49e;border-left:1px solid #a8a49e;border-right:1px solid #fff;border-bottom:1px solid #fff;"></div>
<div class="t" style="left:409px;top:609.81px;font-size:9.2px;line-height:9.2px;color:#222;font-weight:normal;">Permission of User ID:</div>
<div class="r" style="left:506px;top:605px;width:82px;height:19px;background:#d4d0c8;box-sizing:border-box;border-top:1px solid #a8a49e;border-left:1px solid #a8a49e;border-right:1px solid #fff;border-bottom:1px solid #fff;"></div>
<div class="t" style="left:347.0px;width:400px;text-align:center;top:609.81px;font-size:9.2px;line-height:9.2px;color:#222;font-weight:normal;">DEM</div>
<div class="r" style="left:590px;top:605px;width:82px;height:19px;background:#d4d0c8;box-sizing:border-box;border-top:1px solid #a8a49e;border-left:1px solid #a8a49e;border-right:1px solid #fff;border-bottom:1px solid #fff;"></div>
<div class="t" style="left:431.0px;width:400px;text-align:center;top:609.81px;font-size:9.2px;line-height:9.2px;color:#222;font-weight:normal;">Full Control</div>
<div class="r" style="left:11px;top:121px;width:450px;height:195px;background:#858385;"></div>
<div class="t" style="left:-33.5px;width:400px;text-align:center;top:130.54px;font-size:13.3px;line-height:13.3px;color:#1414b8;font-weight:bold;">April 2024</div>
<div class="r" style="left:315px;top:130px;width:81px;height:18px;background:#fff;box-sizing:border-box;border-top:1px solid #808080;border-left:1px solid #808080;border-right:1px solid #fff;border-bottom:1px solid #fff;box-shadow:inset 1px 1px 0 #404040;"></div>
<div class="t" style="left:318px;top:135.46px;font-size:9.5px;line-height:9.5px;color:#000;font-weight:bold;">April</div>
<div class="r" style="left:380px;top:132px;width:14px;height:14px;background:#d4d0c8;box-sizing:border-box;border-top:1px solid #fff;border-left:1px solid #fff;border-right:1px solid #404040;border-bottom:1px solid #404040;box-shadow:inset -1px -1px 0 #808080;"></div>
<svg class="r" style="left:383.0px;top:137.0px" width="8" height="5"><path d="M0.5 0.5h7l-3.5 3.5z" fill="#000"/></svg>
<div class="r" style="left:409px;top:130px;width:42px;height:18px;background:#fff;box-sizing:border-box;border-top:1px solid #808080;border-left:1px solid #808080;border-right:1px solid #fff;border-bottom:1px solid #fff;box-shadow:inset 1px 1px 0 #404040;"></div>
<div class="t" style="left:412px;top:135.46px;font-size:9.5px;line-height:9.5px;color:#000;font-weight:bold;">2024</div>
<div class="r" style="left:436px;top:132px;width:13px;height:14px;background:#d4d0c8;box-sizing:border-box;border-top:1px solid #fff;border-left:1px solid #fff;border-right:1px solid #404040;border-bottom:1px solid #404040;box-shadow:inset -1px -1px 0 #808080;"></div>
<svg class="r" style="left:438.5px;top:137.0px" width="8" height="5"><path d="M0.5 0.5h7l-3.5 3.5z" fill="#000"/></svg>
<div class="r" style="left:20px;top:154px;width:433px;height:153px;background:#000;"></div>
<div class="r" style="left:21px;top:155px;width:61px;height:15px;background:#858385;box-sizing:border-box;border-top:1px solid #f0f0f0;border-left:1px solid #f0f0f0;"></div>
<div class="r" style="left:21px;top:171px;width:61px;height:21px;background:#858385;box-sizing:border-box;border-top:1px solid #f0f0f0;border-left:1px solid #f0f0f0;"></div>
<div class="r" style="left:21px;top:193px;width:61px;height:21px;background:#858385;box-sizing:border-box;border-top:1px solid #f0f0f0;border-left:1px solid #f0f0f0;"></div>
<div class="r" style="left:21px;top:215px;width:61px;height:22px;background:#858385;box-sizing:border-box;border-top:1px solid #f0f0f0;border-left:1px solid #f0f0f0;"></div>
<div class="r" style="left:21px;top:238px;width:61px;height:22px;background:#858385;box-sizing:border-box;border-top:1px solid #f0f0f0;border-left:1px solid #f0f0f0;"></div>
<div class="r" style="left:21px;top:261px;width:61px;height:21px;background:#858385;box-sizing:border-box;border-top:1px solid #f0f0f0;border-left:1px solid #f0f0f0;"></div>
<div class="r" style="left:21px;top:283px;width:61px;height:22px;background:#858385;box-sizing:border-box;border-top:1px solid #f0f0f0;border-left:1px solid #f0f0f0;"></div>
<div class="t" style="left:-149.0px;width:400px;text-align:center;top:156.88px;font-size:10.3px;line-height:10.3px;color:#000;font-weight:bold;">Tue</div>
<div class="r" style="left:83px;top:155px;width:60px;height:15px;background:#858385;box-sizing:border-box;border-top:1px solid #f0f0f0;border-left:1px solid #f0f0f0;"></div>
<div class="r" style="left:83px;top:171px;width:60px;height:21px;background:#858385;box-sizing:border-box;border-top:1px solid #f0f0f0;border-left:1px solid #f0f0f0;"></div>
<div class="r" style="left:83px;top:193px;width:60px;height:21px;background:#858385;box-sizing:border-box;border-top:1px solid #f0f0f0;border-left:1px solid #f0f0f0;"></div>
<div class="r" style="left:83px;top:215px;width:60px;height:22px;background:#858385;box-sizing:border-box;border-top:1px solid #f0f0f0;border-left:1px solid #f0f0f0;"></div>
<div class="r" style="left:83px;top:238px;width:60px;height:22px;background:#858385;box-sizing:border-box;border-top:1px solid #f0f0f0;border-left:1px solid #f0f0f0;"></div>
<div class="r" style="left:83px;top:261px;width:60px;height:21px;background:#858385;box-sizing:border-box;border-top:1px solid #f0f0f0;border-left:1px solid #f0f0f0;"></div>
<div class="r" style="left:83px;top:283px;width:60px;height:22px;background:#858385;box-sizing:border-box;border-top:1px solid #f0f0f0;border-left:1px solid #f0f0f0;"></div>
<div class="t" style="left:-87.5px;width:400px;text-align:center;top:156.88px;font-size:10.3px;line-height:10.3px;color:#000;font-weight:bold;">Wed</div>
<div class="r" style="left:144px;top:155px;width:61px;height:15px;background:#858385;box-sizing:border-box;border-top:1px solid #f0f0f0;border-left:1px solid #f0f0f0;"></div>
<div class="r" style="left:144px;top:171px;width:61px;height:21px;background:#858385;box-sizing:border-box;border-top:1px solid #f0f0f0;border-left:1px solid #f0f0f0;"></div>
<div class="r" style="left:144px;top:193px;width:61px;height:21px;background:#858385;box-sizing:border-box;border-top:1px solid #f0f0f0;border-left:1px solid #f0f0f0;"></div>
<div class="r" style="left:144px;top:215px;width:61px;height:22px;background:#858385;box-sizing:border-box;border-top:1px solid #f0f0f0;border-left:1px solid #f0f0f0;"></div>
<div class="r" style="left:144px;top:238px;width:61px;height:22px;background:#858385;box-sizing:border-box;border-top:1px solid #f0f0f0;border-left:1px solid #f0f0f0;"></div>
<div class="r" style="left:144px;top:261px;width:61px;height:21px;background:#858385;box-sizing:border-box;border-top:1px solid #f0f0f0;border-left:1px solid #f0f0f0;"></div>
<div class="r" style="left:144px;top:283px;width:61px;height:22px;background:#858385;box-sizing:border-box;border-top:1px solid #f0f0f0;border-left:1px solid #f0f0f0;"></div>
<div class="t" style="left:-26.0px;width:400px;text-align:center;top:156.88px;font-size:10.3px;line-height:10.3px;color:#000;font-weight:bold;">Thu</div>
<div class="r" style="left:206px;top:155px;width:60px;height:15px;background:#858385;box-sizing:border-box;border-top:1px solid #f0f0f0;border-left:1px solid #f0f0f0;"></div>
<div class="r" style="left:206px;top:171px;width:60px;height:21px;background:#858385;box-sizing:border-box;border-top:1px solid #f0f0f0;border-left:1px solid #f0f0f0;"></div>
<div class="r" style="left:206px;top:193px;width:60px;height:21px;background:#858385;box-sizing:border-box;border-top:1px solid #f0f0f0;border-left:1px solid #f0f0f0;"></div>
<div class="r" style="left:206px;top:215px;width:60px;height:22px;background:#858385;box-sizing:border-box;border-top:1px solid #f0f0f0;border-left:1px solid #f0f0f0;"></div>
<div class="r" style="left:206px;top:238px;width:60px;height:22px;background:#858385;box-sizing:border-box;border-top:1px solid #f0f0f0;border-left:1px solid #f0f0f0;"></div>
<div class="r" style="left:206px;top:261px;width:60px;height:21px;background:#858385;box-sizing:border-box;border-top:1px solid #f0f0f0;border-left:1px solid #f0f0f0;"></div>
<div class="r" style="left:206px;top:283px;width:60px;height:22px;background:#858385;box-sizing:border-box;border-top:1px solid #f0f0f0;border-left:1px solid #f0f0f0;"></div>
<div class="t" style="left:35.5px;width:400px;text-align:center;top:156.88px;font-size:10.3px;line-height:10.3px;color:#000;font-weight:bold;">Fri</div>
<div class="r" style="left:267px;top:155px;width:61px;height:15px;background:#858385;box-sizing:border-box;border-top:1px solid #f0f0f0;border-left:1px solid #f0f0f0;"></div>
<div class="r" style="left:267px;top:171px;width:61px;height:21px;background:#858385;box-sizing:border-box;border-top:1px solid #f0f0f0;border-left:1px solid #f0f0f0;"></div>
<div class="r" style="left:267px;top:193px;width:61px;height:21px;background:#858385;box-sizing:border-box;border-top:1px solid #f0f0f0;border-left:1px solid #f0f0f0;"></div>
<div class="r" style="left:267px;top:215px;width:61px;height:22px;background:#858385;box-sizing:border-box;border-top:1px solid #f0f0f0;border-left:1px solid #f0f0f0;"></div>
<div class="r" style="left:267px;top:238px;width:61px;height:22px;background:#858385;box-sizing:border-box;border-top:1px solid #f0f0f0;border-left:1px solid #f0f0f0;"></div>
<div class="r" style="left:267px;top:261px;width:61px;height:21px;background:#858385;box-sizing:border-box;border-top:1px solid #f0f0f0;border-left:1px solid #f0f0f0;"></div>
<div class="r" style="left:267px;top:283px;width:61px;height:22px;background:#858385;box-sizing:border-box;border-top:1px solid #f0f0f0;border-left:1px solid #f0f0f0;"></div>
<div class="t" style="left:97.0px;width:400px;text-align:center;top:156.88px;font-size:10.3px;line-height:10.3px;color:#000;font-weight:bold;">Sat</div>
<div class="r" style="left:329px;top:155px;width:61px;height:15px;background:#858385;box-sizing:border-box;border-top:1px solid #f0f0f0;border-left:1px solid #f0f0f0;"></div>
<div class="r" style="left:329px;top:171px;width:61px;height:21px;background:#858385;box-sizing:border-box;border-top:1px solid #f0f0f0;border-left:1px solid #f0f0f0;"></div>
<div class="r" style="left:329px;top:193px;width:61px;height:21px;background:#858385;box-sizing:border-box;border-top:1px solid #f0f0f0;border-left:1px solid #f0f0f0;"></div>
<div class="r" style="left:329px;top:215px;width:61px;height:22px;background:#858385;box-sizing:border-box;border-top:1px solid #f0f0f0;border-left:1px solid #f0f0f0;"></div>
<div class="r" style="left:329px;top:238px;width:61px;height:22px;background:#858385;box-sizing:border-box;border-top:1px solid #f0f0f0;border-left:1px solid #f0f0f0;"></div>
<div class="r" style="left:329px;top:261px;width:61px;height:21px;background:#858385;box-sizing:border-box;border-top:1px solid #f0f0f0;border-left:1px solid #f0f0f0;"></div>
<div class="r" style="left:329px;top:283px;width:61px;height:22px;background:#858385;box-sizing:border-box;border-top:1px solid #f0f0f0;border-left:1px solid #f0f0f0;"></div>
<div class="t" style="left:159.0px;width:400px;text-align:center;top:156.88px;font-size:10.3px;line-height:10.3px;color:#000;font-weight:bold;">Sun</div>
<div class="r" style="left:391px;top:155px;width:61px;height:15px;background:#858385;box-sizing:border-box;border-top:1px solid #f0f0f0;border-left:1px solid #f0f0f0;"></div>
<div class="r" style="left:391px;top:171px;width:61px;height:21px;background:#858385;box-sizing:border-box;border-top:1px solid #f0f0f0;border-left:1px solid #f0f0f0;"></div>
<div class="r" style="left:391px;top:193px;width:61px;height:21px;background:#858385;box-sizing:border-box;border-top:1px solid #f0f0f0;border-left:1px solid #f0f0f0;"></div>
<div class="r" style="left:391px;top:215px;width:61px;height:22px;background:#858385;box-sizing:border-box;border-top:1px solid #f0f0f0;border-left:1px solid #f0f0f0;"></div>
<div class="r" style="left:391px;top:238px;width:61px;height:22px;background:#858385;box-sizing:border-box;border-top:1px solid #f0f0f0;border-left:1px solid #f0f0f0;"></div>
<div class="r" style="left:391px;top:261px;width:61px;height:21px;background:#858385;box-sizing:border-box;border-top:1px solid #f0f0f0;border-left:1px solid #f0f0f0;"></div>
<div class="r" style="left:391px;top:283px;width:61px;height:22px;background:#858385;box-sizing:border-box;border-top:1px solid #f0f0f0;border-left:1px solid #f0f0f0;"></div>
<div class="t" style="left:221.0px;width:400px;text-align:center;top:156.88px;font-size:10.3px;line-height:10.3px;color:#000;font-weight:bold;">Mon</div>
<div class="r" style="left:21px;top:192px;width:431px;height:1px;background:#4a484a;"></div>
<div class="r" style="left:21px;top:193px;width:431px;height:1px;background:#b4b2b4;"></div>
<div class="r" style="left:21px;top:237px;width:431px;height:1px;background:#4a484a;"></div>
<div class="r" style="left:21px;top:238px;width:431px;height:1px;background:#b4b2b4;"></div>
<div class="r" style="left:21px;top:282px;width:431px;height:1px;background:#4a484a;"></div>
<div class="r" style="left:21px;top:283px;width:431px;height:1px;background:#b4b2b4;"></div>
<div class="t" style="left:392px;top:173.50px;font-size:10.4px;line-height:10.4px;color:#2020b0;font-weight:normal;">1</div>
<div class="t" style="left:22px;top:195.50px;font-size:10.4px;line-height:10.4px;color:#2020b0;font-weight:normal;">2</div>
<div class="t" style="left:84px;top:195.50px;font-size:10.4px;line-height:10.4px;color:#2020b0;font-weight:normal;">3</div>
<div class="t" style="left:145px;top:195.50px;font-size:10.4px;line-height:10.4px;color:#2020b0;font-weight:normal;">4</div>
<div class="t" style="left:207px;top:195.50px;font-size:10.4px;line-height:10.4px;color:#2020b0;font-weight:normal;">5</div>
<div class="t" style="left:268px;top:195.50px;font-size:10.4px;line-height:10.4px;color:#202020;font-weight:normal;">6</div>
<div class="t" style="left:330px;top:195.50px;font-size:10.4px;line-height:10.4px;color:#2020b0;font-weight:normal;">7</div>
<div class="t" style="left:392px;top:195.50px;font-size:10.4px;line-height:10.4px;color:#2020b0;font-weight:normal;">8</div>
<div class="t" style="left:22px;top:217.50px;font-size:10.4px;line-height:10.4px;color:#2020b0;font-weight:normal;">9</div>
<div class="t" style="left:84px;top:217.50px;font-size:10.4px;line-height:10.4px;color:#2020b0;font-weight:normal;">10</div>
<div class="t" style="left:145px;top:217.50px;font-size:10.4px;line-height:10.4px;color:#2020b0;font-weight:normal;">11</div>
<div class="t" style="left:207px;top:217.50px;font-size:10.4px;line-height:10.4px;color:#2020b0;font-weight:normal;">12</div>
<div class="t" style="left:268px;top:217.50px;font-size:10.4px;line-height:10.4px;color:#2020b0;font-weight:normal;">13</div>
<div class="t" style="left:330px;top:217.50px;font-size:10.4px;line-height:10.4px;color:#2020b0;font-weight:normal;">14</div>
<div class="t" style="left:392px;top:217.50px;font-size:10.4px;line-height:10.4px;color:#2020b0;font-weight:normal;">15</div>
<div class="t" style="left:22px;top:240.50px;font-size:10.4px;line-height:10.4px;color:#2020b0;font-weight:normal;">16</div>
<div class="t" style="left:84px;top:240.50px;font-size:10.4px;line-height:10.4px;color:#2020b0;font-weight:normal;">17</div>
<div class="t" style="left:145px;top:240.50px;font-size:10.4px;line-height:10.4px;color:#2020b0;font-weight:normal;">18</div>
<div class="t" style="left:207px;top:240.50px;font-size:10.4px;line-height:10.4px;color:#2020b0;font-weight:normal;">19</div>
<div class="t" style="left:268px;top:240.50px;font-size:10.4px;line-height:10.4px;color:#2020b0;font-weight:normal;">20</div>
<div class="t" style="left:330px;top:240.50px;font-size:10.4px;line-height:10.4px;color:#2020b0;font-weight:normal;">21</div>
<div class="t" style="left:392px;top:240.50px;font-size:10.4px;line-height:10.4px;color:#2020b0;font-weight:normal;">22</div>
<div class="t" style="left:22px;top:263.50px;font-size:10.4px;line-height:10.4px;color:#2020b0;font-weight:normal;">23</div>
<div class="t" style="left:84px;top:263.50px;font-size:10.4px;line-height:10.4px;color:#2020b0;font-weight:normal;">24</div>
<div class="t" style="left:145px;top:263.50px;font-size:10.4px;line-height:10.4px;color:#2020b0;font-weight:normal;">25</div>
<div class="t" style="left:207px;top:263.50px;font-size:10.4px;line-height:10.4px;color:#2020b0;font-weight:normal;">26</div>
<div class="t" style="left:268px;top:263.50px;font-size:10.4px;line-height:10.4px;color:#2020b0;font-weight:normal;">27</div>
<div class="t" style="left:330px;top:263.50px;font-size:10.4px;line-height:10.4px;color:#2020b0;font-weight:normal;">28</div>
<div class="t" style="left:392px;top:263.50px;font-size:10.4px;line-height:10.4px;color:#2020b0;font-weight:normal;">29</div>
<div class="t" style="left:22px;top:285.50px;font-size:10.4px;line-height:10.4px;color:#2020b0;font-weight:normal;">30</div>
<div class="r" style="left:267px;top:193px;width:61px;height:21px;background:transparent;box-sizing:border-box;border:1px dotted #000;"></div>
<div class="r" style="left:509px;top:270px;width:172px;height:125px;background:#d4d0c8;box-sizing:border-box;border-top:1px solid #e8e8e8;border-left:1px solid #e8e8e8;border-right:1px solid #404040;border-bottom:1px solid #404040;"></div>
<div class="r" style="left:510px;top:272px;width:169px;height:16px;background:#838084;"></div>
<div class="t" style="left:512px;top:274.79px;font-size:9.7px;line-height:9.7px;color:#d8d4d0;font-weight:bold;">Locked</div>
<div class="r" style="left:663px;top:274px;width:13px;height:12px;background:#d4d0c8;box-sizing:border-box;border-top:1px solid #fff;border-left:1px solid #fff;border-right:1px solid #404040;border-bottom:1px solid #404040;box-shadow:inset -1px -1px 0 #808080;"></div>
<svg class="r" style="left:665px;top:276px" width="9" height="8"><path d="M1 0.5l7 7M8 0.5l-7 7" stroke="#000" stroke-width="1.5"/></svg>
<div class="r" style="left:510px;top:288px;width:169px;height:69px;background:#fff;"></div>
<svg class="r" style="left:528px;top:308px" width="28" height="28"><defs><linearGradient id="ig" x1="0" y1="0" x2="1" y2="1"><stop offset="0" stop-color="#4a7ae8"/><stop offset="0.5" stop-color="#2a52d0"/><stop offset="0.52" stop-color="#1e40b8"/><stop offset="1" stop-color="#2a48c8"/></linearGradient></defs><circle cx="14.2" cy="13.8" r="12.6" fill="url(#ig)" stroke="#b8bcc8" stroke-width="1.6"/><circle cx="14.2" cy="7.2" r="2" fill="#d8ecff"/><rect x="12.9" y="10.2" width="2.6" height="12.6" fill="#eef4ff"/></svg>
<div class="t" style="left:563.6px;top:319.61px;font-size:9.2px;line-height:9.2px;color:#000;font-weight:normal;">Records are Locked !</div>
<div class="r" style="left:605px;top:365px;width:66px;height:20px;background:#d4d0c8;box-sizing:border-box;border-top:1px solid #fff;border-left:1px solid #fff;border-right:1px solid #404040;border-bottom:1px solid #404040;box-shadow:inset -1px -1px 0 #808080;"></div>
<div class="t" style="left:438px;width:400px;text-align:center;top:369.96px;font-size:9.5px;line-height:9.5px;color:#222;font-weight:normal;">OK</div>
<svg class="r" style="left:600px;top:360px" width="160" height="120">
<path d="M33 9 L 101 92 L 122 73 Z" fill="#1296f0"/>
<circle cx="119" cy="93" r="17.5" fill="#1296f0" stroke="#1a1a1a" stroke-width="1.3"/>
<text x="119" y="99.5" text-anchor="middle" font-family="Liberation Sans" font-weight="bold" font-size="17" fill="#fff">4</text>
</svg>
</body></html>
